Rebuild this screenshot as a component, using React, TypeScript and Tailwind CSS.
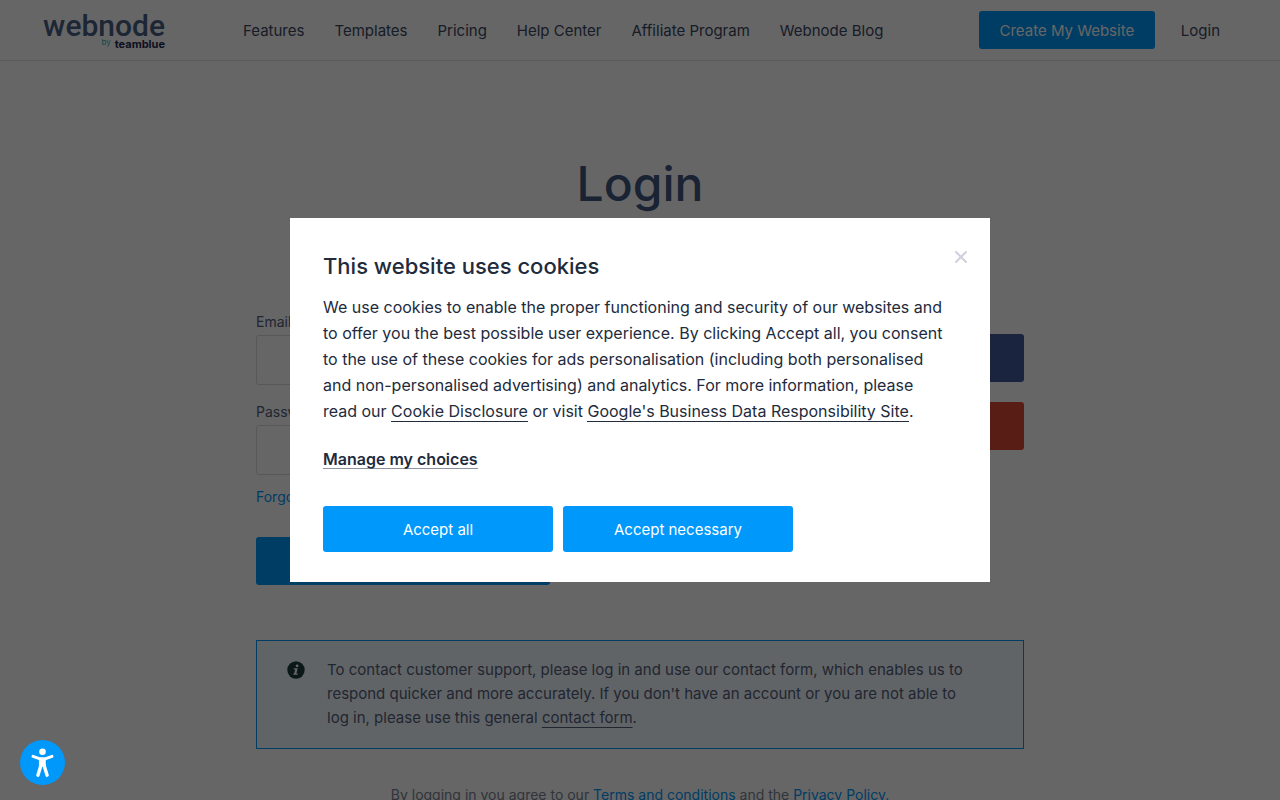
import { useState } from "react";
import { X } from "lucide-react";

const navLinks = [
  { label: "Features", href: "#features" },
  { label: "Templates", href: "#templates" },
  { label: "Pricing", href: "#pricing" },
  { label: "Help Center", href: "#help" },
  { label: "Affiliate Program", href: "#affiliate" },
  { label: "Webnode Blog", href: "#blog" },
];

function Logo() {
  return (
    <a href="#home" className="flex w-[120px] flex-col items-end pt-[3px] text-[#4a5f86]">
      <span className="font-['Roboto','Liberation_Sans',sans-serif] text-[30px] leading-[25px] font-medium">webnode</span>
      <span className="flex gap-1 text-[11px] leading-[12px] font-bold text-[#1c2c50]">
        <span className="text-[8px] leading-[8px] font-normal text-[#2bb3c4]">by</span>
        teamblue
      </span>
    </a>
  );
}

function Header() {
  return (
    <header className="flex h-[61px] items-center border-b border-[#e4e7ea] pr-[60px] pl-[45px] text-[15px] text-[#3b4763]">
      <Logo />
      <nav className="ml-[78px] flex gap-[30px] pt-[2px]">
        {navLinks.map((link) => (
          <a key={link.label} href={link.href} className="whitespace-nowrap">
            {link.label}
          </a>
        ))}
      </nav>
      <a
        href="#create"
        className="ml-auto flex h-[38px] w-[176px] items-center justify-center rounded-[3px] bg-[#0098fa] pt-[2px] text-white"
      >
        Create My Website
      </a>
      <a href="#login" className="ml-[26px] pt-[2px]">
        Login
      </a>
    </header>
  );
}

function Field({ id, label, type }: { id: string; label: string; type: string }) {
  return (
    <div className="mb-4">
      <label htmlFor={id} className="block pb-[2px] text-sm leading-[22px]">
        {label}
      </label>
      <input id={id} type={type} className="block h-[50px] w-full rounded-[3px] border border-[#d8dce3] px-4" />
    </div>
  );
}

function LoginPage() {
  return (
    <main className="mx-auto w-[768px] max-w-full text-[#53607c]">
      <h1 className="pt-[93px] text-center text-5xl leading-[60px] font-medium text-[#42587f]">Login</h1>
      <div className="flex justify-between pt-[97px]">
        <form className="w-[294px]" onSubmit={(e) => e.preventDefault()}>
          <Field id="email" label="Email" type="email" />
          <Field id="password" label="Password" type="password" />
          <a href="#forgot" className="-mt-1 block text-sm leading-5 text-[#0098fa]">
            Forgot your password?
          </a>
          <button type="submit" className="mt-[30px] h-12 w-full rounded-[3px] bg-[#0098fa] text-[15px] text-white">
            Login
          </button>
        </form>
        <div className="flex w-[294px] flex-col gap-5 pt-[23px] text-[15px] text-white">
          <button type="button" className="h-12 rounded-[3px] bg-[#415b9f]">
            Facebook
          </button>
          <button type="button" className="h-12 rounded-[3px] bg-[#dd4b39]">
            Google
          </button>
        </div>
      </div>
      <div className="mt-[55px] flex border border-[#0098fa] bg-[#f3faff] pt-[17px] pr-12 pb-[18px] pl-[30px]">
        <svg viewBox="0 0 18 18" className="mt-[3px] mr-[22px] size-[18px] shrink-0" aria-hidden="true">
          <circle cx="9" cy="9" r="8.7" fill="#1d3a3f" />
          <circle cx="10.1" cy="4.8" r="1.4" fill="#fff" />
          <path d="M6.8 7.2h3.9l-1.3 5.2h1.2v1.4H6.4v-1.4h.8l1-3.8H6.8z" fill="#fff" />
        </svg>
        <p className="text-[15px] leading-6">
          To contact customer support, please log in and use our contact form, which enables us to respond quicker and
          more accurately. If you don't have an account or you are not able to log in, please use this general{" "}
          <a href="#contact" className="underline decoration-1 underline-offset-4">
            contact form
          </a>
          .
        </p>
      </div>
      <p className="mt-9 text-center text-sm leading-5 text-[#7a8394]">
        By logging in you agree to our{" "}
        <a href="#terms" className="text-[#0098fa]">
          Terms and conditions
        </a>{" "}
        and the{" "}
        <a href="#privacy" className="text-[#0098fa]">
          Privacy Policy.
        </a>
      </p>
    </main>
  );
}

function CookieDialog({ onClose }: { onClose: () => void }) {
  return (
    <div className="fixed inset-0 z-10 flex items-center justify-center bg-black/60">
      <div
        role="dialog"
        aria-labelledby="cookie-title"
        className="relative w-[700px] bg-white px-[33px] pt-[33px] pb-[30px] text-[#222b3c]"
      >
        <button type="button" aria-label="Close" onClick={onClose} className="absolute top-[29px] right-[19px] text-[#cfd1dc]">
          <X size={20} strokeWidth={2.5} />
        </button>
        <h2 id="cookie-title" className="text-[22px] leading-[30px] font-medium">
          This website uses cookies
        </h2>
        <p className="mt-[13px] pr-2 text-base leading-[26px]">
          We use cookies to enable the proper functioning and security of our websites and to offer you the best
          possible user experience. By clicking Accept all, you consent to the use of these cookies for ads
          personalisation (including both personalised and non-personalised advertising) and analytics. For more
          information, please read our{" "}
          <a href="#disclosure" className="border-b border-[#222b3c]">
            Cookie Disclosure
          </a>{" "}
          or visit{" "}
          <a href="#google" className="border-b border-[#222b3c]">
            Google's Business Data Responsibility Site
          </a>
          .
        </p>
        <button type="button" className="mt-[26px] block border-b border-[#8d93a0] text-base leading-[18px] font-semibold">
          Manage my choices
        </button>
        <div className="mt-[37px] flex gap-[10px] text-[15px] text-white">
          <button type="button" onClick={onClose} className="h-[46px] w-[230px] rounded-[3px] bg-[#0098fa] pt-[2px]">
            Accept all
          </button>
          <button type="button" onClick={onClose} className="h-[46px] w-[230px] rounded-[3px] bg-[#0098fa] pt-[2px]">
            Accept necessary
          </button>
        </div>
      </div>
    </div>
  );
}

function AccessibilityButton() {
  return (
    <button
      type="button"
      aria-label="Accessibility"
      className="fixed bottom-[15px] left-5 z-20 flex size-[45px] items-center justify-center rounded-full bg-[#0098fa]"
    >
      <svg viewBox="0 0 24 30" className="h-[30px] w-6" fill="#fff" stroke="#fff" strokeLinecap="round" strokeLinejoin="round">
        <circle cx="11.5" cy="3.7" r="3.3" stroke="none" />
        <path d="M2 8.4 9 10.8h5L21 8.4" strokeWidth="3" fill="none" />
        <path d="M8.8 11h5.4v7H8.8z" strokeWidth="1" />
        <path d="M9.9 17.5 6.9 27.2M13.1 17.5 16.1 27.2" strokeWidth="3.4" fill="none" />
      </svg>
    </button>
  );
}

export default function App() {
  const [showCookies, setShowCookies] = useState(true);

  return (
    <div className="h-screen overflow-hidden bg-white font-['Inter','Liberation_Sans',sans-serif]">
      <Header />
      <LoginPage />
      {showCookies && <CookieDialog onClose={() => setShowCookies(false)} />}
      <AccessibilityButton />
    </div>
  );
}
